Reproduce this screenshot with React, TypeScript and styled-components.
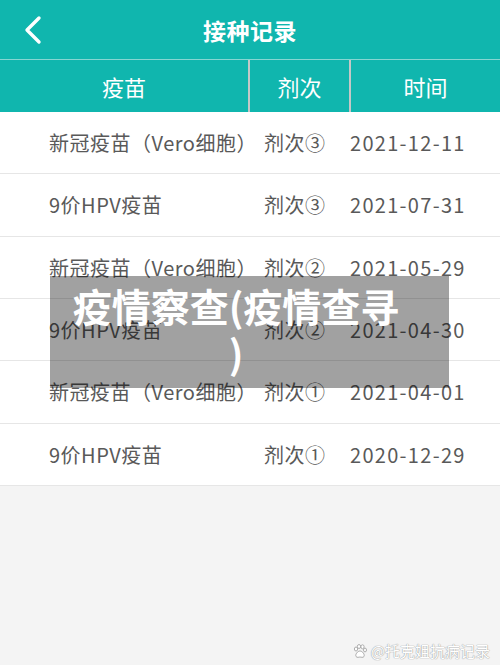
import styled, { createGlobalStyle } from 'styled-components';

const GlobalStyle = createGlobalStyle`
    html, body {
        margin: 0;
        padding: 0;
        background: #f4f4f4;
        font-family: "Noto Sans CJK SC", "Noto Sans", sans-serif;
    }
`;

const TEAL = '#10b6ae';

const Page = styled.div`
    position: relative;
    width: 500px;
    height: 665px;
    overflow: hidden;
    background: #f4f4f4;
`;

const TopBar = styled.header`
    height: 59px;
    background: ${TEAL};
    display: grid;
    grid-template-columns: 70px 1fr 70px;
    align-items: center;
`;

const BackButton = styled.button`
    border: 0;
    background: none;
    padding: 0 0 0 22px;
    height: 59px;
    display: flex;
    align-items: center;
    cursor: pointer;
`;

const Title = styled.h1`
    margin: 0;
    text-align: center;
    color: #fff;
    font-size: 23px;
    font-weight: 700;
    letter-spacing: 0.5px;
`;

const HeadRow = styled.div`
    display: grid;
    grid-template-columns: 248px 101px 1fr;
    height: 53px;
    background: ${TEAL};
    border-top: 1px solid #86d6d2;
    box-sizing: border-box;
`;

const HeadCell = styled.div<{ $divider?: boolean }>`
    display: flex;
    align-items: center;
    justify-content: center;
    color: #fff;
    font-size: 22px;
    border-left: ${(p) => (p.$divider ? '2px solid #c4c8c7' : 'none')};
`;

const Body = styled.div`
    background: #fff;
`;

const Row = styled.div`
    display: grid;
    grid-template-columns: 215px 86px 1fr;
    align-items: center;
    height: 62.33px;
    box-sizing: border-box;
    padding-left: 49px;
    border-bottom: 1px solid #e6e6e6;
    color: #595959;
    font-size: 20px;
    letter-spacing: 0.5px;
    white-space: nowrap;
`;

const Cell = styled.span<{ $wide?: boolean }>`
    letter-spacing: ${(p) => (p.$wide ? '1.3px' : 'inherit')};
`;

const Overlay = styled.div`
    position: absolute;
    left: 50px;
    top: 276px;
    width: 399px;
    height: 112px;
    box-sizing: border-box;
    padding: 6px 47px 0 20px;
    background: rgba(0, 0, 0, 0.37);
    color: #fff;
    font-size: 39px;
    font-weight: 700;
    line-height: 47px;
    text-align: center;
    line-break: anywhere;
`;

const Watermark = styled.div`
    position: absolute;
    right: 10px;
    bottom: 4px;
    display: flex;
    align-items: center;
    gap: 3px;
    font-size: 15px;
    color: #fff;
    text-shadow: 0 0 1px #9a9a9a, 0 0 1px #9a9a9a;
`;

const records = [
    { name: '新冠疫苗（Vero细胞）', dose: '剂次③', date: '2021-12-11' },
    { name: '9价HPV疫苗', dose: '剂次③', date: '2021-07-31' },
    { name: '新冠疫苗（Vero细胞）', dose: '剂次②', date: '2021-05-29' },
    { name: '9价HPV疫苗', dose: '剂次②', date: '2021-04-30' },
    { name: '新冠疫苗（Vero细胞）', dose: '剂次①', date: '2021-04-01' },
    { name: '9价HPV疫苗', dose: '剂次①', date: '2020-12-29' },
];

const App = () => {
    return (
        <Page>
            <GlobalStyle />
            <TopBar>
                <BackButton aria-label="返回">
                    <svg width="22" height="30" viewBox="0 0 22 30">
                        <polyline
                            points="17,3 5,15 17,27"
                            fill="none"
                            stroke="#fff"
                            strokeWidth="3.4"
                            strokeLinecap="round"
                            strokeLinejoin="round"
                        />
                    </svg>
                </BackButton>
                <Title>接种记录</Title>
                <span />
            </TopBar>
            <HeadRow>
                <HeadCell>疫苗</HeadCell>
                <HeadCell $divider>剂次</HeadCell>
                <HeadCell $divider>时间</HeadCell>
            </HeadRow>
            <Body>
                {records.map((r, i) => (
                    <Row key={i}>
                        <Cell>{r.name}</Cell>
                        <Cell>{r.dose}</Cell>
                        <Cell $wide>{r.date}</Cell>
                    </Row>
                ))}
            </Body>
            <Overlay>疫情察查(疫情查寻)</Overlay>
            <Watermark>
                <svg width="16" height="16" viewBox="0 0 16 16">
                    <g fill="#fff" stroke="#9a9a9a" strokeWidth="0.8">
                        <ellipse cx="4" cy="6" rx="1.6" ry="2" />
                        <ellipse cx="7" cy="3.5" rx="1.6" ry="2" />
                        <ellipse cx="10.5" cy="3.8" rx="1.6" ry="2" />
                        <ellipse cx="13" cy="7" rx="1.5" ry="1.9" />
                        <path d="M8 8c-2.5 0-5 3.5-4 5.5 1 1.5 3 .5 4 .5s3 1 4-.5c1-2-1.5-5.5-4-5.5z" />
                    </g>
                </svg>
                <span>@托克姐抗病记录</span>
            </Watermark>
        </Page>
    );
};

export default App;
